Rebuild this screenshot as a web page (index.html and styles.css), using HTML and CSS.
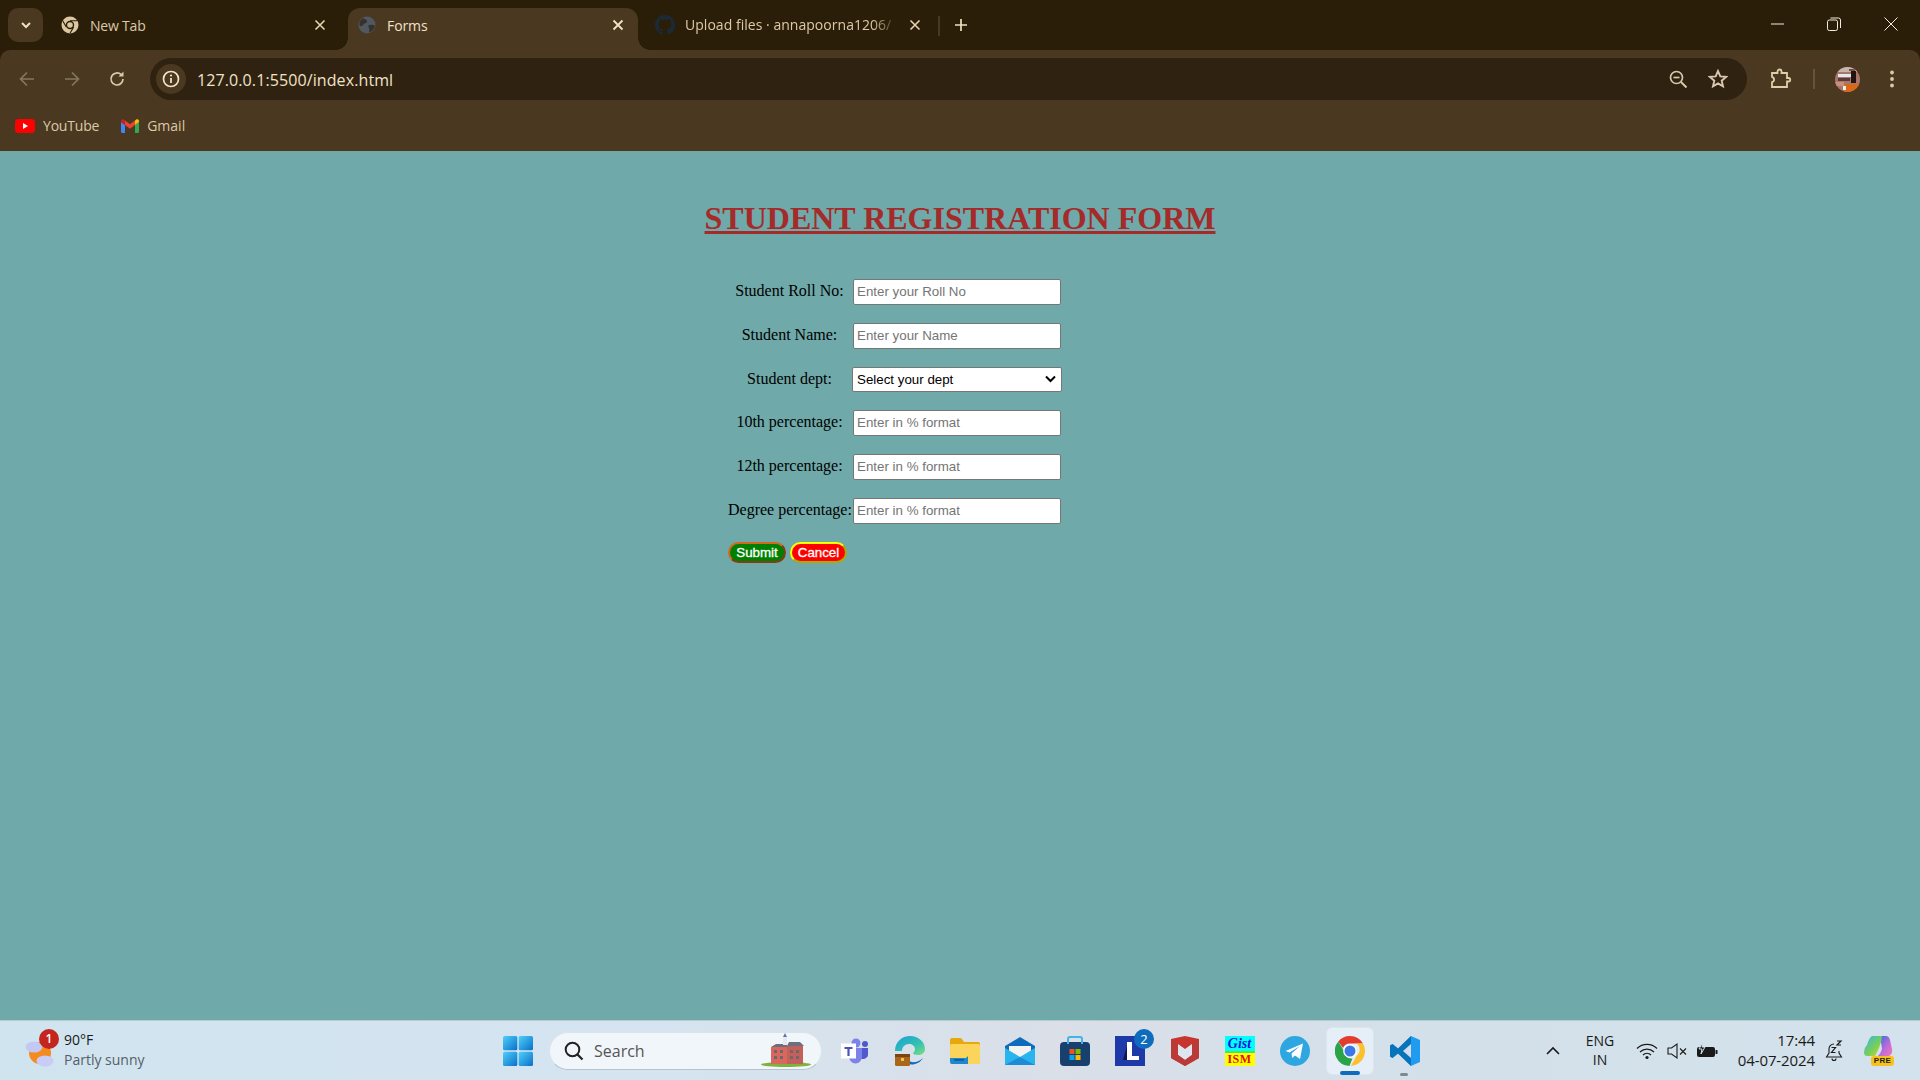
FILE: index.html
```html
<!DOCTYPE html>
<html lang="en">
<head>
<meta charset="utf-8">
<title>Forms</title>
<link rel="stylesheet" href="styles.css">
</head>
<body>
<div class="browser">
  <div class="tabstrip">
    <div class="tabsearch"><svg width="12" height="12" viewBox="0 0 12 12"><path d="M2 4l4 4 4-4" fill="none" stroke="#f0e0c0" stroke-width="2"/></svg></div>
    <div class="tab first">
      <svg class="fav" width="18" height="18" viewBox="0 0 18 18"><circle cx="9" cy="9" r="8.5" fill="#dcc7a3"/><circle cx="9" cy="9" r="4.2" fill="#2b1e09"/><circle cx="9" cy="9" r="2.8" fill="#dcc7a3"/><path d="M9 4.8h7.2M5.4 11.1L1.8 5M12.6 11.1L9 17.2" stroke="#2b1e09" stroke-width="1.1"/></svg>
      <span class="tabtitle">New Tab</span>
      <svg class="x" width="12" height="12" viewBox="0 0 12 12"><path d="M1.5 1.5l9 9M10.5 1.5l-9 9" stroke="#e6d3b0" stroke-width="1.6"/></svg>
    </div>
    <div class="tab active">
      <svg class="fav" width="18" height="18" viewBox="0 0 18 18"><circle cx="9" cy="9" r="8.5" fill="#515860"/><path d="M5 2.2c2 1 4 1.4 4 3.2S6.500 7 5.600 8.200 3.500 11 1.500 9.500C1 6 2.500 3.500 5 2.200zM11 9c2-.5 4.500-.5 6 .5-.4 3-2.500 5.800-5.500 7-1-1.500.5-3-.5-4.500-.6-1-1-2.500 0-3z" fill="#35322c"/></svg>
      <span class="tabtitle">Forms</span>
      <svg class="x" width="12" height="12" viewBox="0 0 12 12"><path d="M1.5 1.5l9 9M10.5 1.5l-9 9" stroke="#f3e3c5" stroke-width="1.8"/></svg>
    </div>
    <div class="tab third">
      <svg class="fav" width="20" height="20" viewBox="0 0 16 16"><path fill="#1c2a38" d="M8 0C3.580 0 0 3.580 0 8c0 3.540 2.290 6.530 5.470 7.590.4.070.55-.17.55-.38 0-.19-.01-.82-.01-1.490-2.010.37-2.530-.49-2.690-.94-.09-.23-.48-.94-.82-1.130-.28-.15-.68-.52-.01-.53.630-.01 1.080.58 1.230.82.720 1.210 1.870.87 2.330.66.070-.52.280-.87.510-1.070-1.780-.2-3.640-.89-3.640-3.950 0-.87.310-1.590.82-2.150-.08-.2-.36-1.020.08-2.120 0 0 .67-.21 2.200.82.640-.18 1.320-.27 2-.27s1.360.09 2 .27c1.530-1.040 2.200-.82 2.200-.82.440 1.100.16 1.920.08 2.120.51.560.82 1.270.82 2.150 0 3.070-1.870 3.750-3.650 3.950.290.250.540.730.540 1.480 0 1.070-.01 1.930-.01 2.200 0 .210.150.460.550.380A8.010 8.010 0 0016 8c0-4.420-3.580-8-8-8z"/></svg>
      <span class="tabtitle fade">Upload files · annapoorna1206/</span>
      <svg class="x" width="12" height="12" viewBox="0 0 12 12"><path d="M1.5 1.500l9 9M10.500 1.500l-9 9" stroke="#e6d3b0" stroke-width="1.600"/></svg>
    </div>
    <div class="tabsep"></div>
    <svg class="newtab" width="14" height="14" viewBox="0 0 14 14"><path d="M7 1v12M1 7h12" stroke="#f0e0c0" stroke-width="1.700"/></svg>
    <div class="winctl">
      <svg width="14" height="14" viewBox="0 0 14 14"><path d="M1 7h13" stroke="#f0ece4" stroke-width="1"/></svg>
      <svg width="14" height="14" viewBox="0 0 14 14"><rect x=".5" y="3" width="10" height="10.500" rx="1.800" fill="none" stroke="#f0ece4"/><path d="M3.500 1h8a2 2 0 012 2v8" fill="none" stroke="#f0ece4"/></svg>
      <svg width="14" height="14" viewBox="0 0 14 14"><path d="M.5.500l13 13M13.500.500l-13 13" stroke="#f0ece4" stroke-width="1"/></svg>
    </div>
  </div>
  <div class="toolbar">
    <div class="navbtns">
      <svg width="18" height="18" viewBox="0 0 18 18"><path d="M16 9H3M9 2.500L2.500 9 9 15.500" fill="none" stroke="#85775f" stroke-width="1.700"/></svg>
      <svg width="18" height="18" viewBox="0 0 18 18"><path d="M2 9h13M9 2.500L15.500 9 9 15.500" fill="none" stroke="#85775f" stroke-width="1.700"/></svg>
      <svg width="18" height="18" viewBox="0 0 18 18"><path d="M15 9a6 6 0 11-1.800-4.300" fill="none" stroke="#dcc9a8" stroke-width="1.700"/><path d="M15.500 1.500v5h-5z" fill="#dcc9a8"/></svg>
    </div>
    <div class="omnibox">
      <div class="chip"><svg width="18" height="18" viewBox="0 0 18 18"><circle cx="9" cy="9" r="7.500" fill="none" stroke="#f2e4c8" stroke-width="1.700"/><path d="M9 8v5" stroke="#f2e4c8" stroke-width="1.800"/><circle cx="9" cy="5.500" r="1.100" fill="#f2e4c8"/></svg></div>
      <span class="url">127.0.0.1:5500/index.html</span>
      <div class="omni-right">
        <svg width="20" height="20" viewBox="0 0 20 20"><circle cx="8.500" cy="8.500" r="6" fill="none" stroke="#d8c9ae" stroke-width="1.700"/><path d="M5.500 8.500h6" stroke="#d8c9ae" stroke-width="1.700"/><path d="M13 13l5.500 5.500" stroke="#d8c9ae" stroke-width="2"/></svg>
        <svg width="20" height="20" viewBox="0 0 20 20"><path d="M10 2l2.300 5.400 5.800.5-4.400 3.800 1.300 5.700-5-3-5 3 1.300-5.700L1.900 7.900l5.800-.5z" fill="none" stroke="#d8c9ae" stroke-width="1.900"/></svg>
      </div>
    </div>
    <div class="tool-right">
      <svg class="ext" width="22" height="22" viewBox="0 0 22 22"><path d="M2 5h5.500V3.500a2 2 0 014 0V5H17v5h1.500a1.500 1.500 0 010 3.500H17V19H2v-4.800a2.800 2.800 0 000-5.400z" fill="none" stroke="#e0cdaa" stroke-width="1.800"/></svg>
      <div class="toolsep"></div>
      <div class="avatar"><svg width="25" height="25" viewBox="0 0 25 25"><rect width="25" height="25" fill="#a8776a"/><rect y="0" width="25" height="5" fill="#c4b6ac"/><rect x="3" y="7" width="13" height="3" fill="#dfe9ef"/><rect x="3" y="11" width="12" height="3" fill="#5a3a34"/><rect x="16" y="4" width="5" height="12" fill="#231410"/><rect y="17" x="9" width="16" height="8" fill="#d9691a"/><rect x="0" y="15" width="9" height="4" fill="#c98f7e"/><rect x="8" y="19" width="3" height="4" fill="#eee"/><rect x="14" y="2" width="6" height="2" fill="#7c4a44"/></svg></div>
      <svg class="dots" width="6" height="18" viewBox="0 0 6 18"><circle cx="3" cy="2.500" r="1.900" fill="#dcc9a8"/><circle cx="3" cy="9" r="1.900" fill="#dcc9a8"/><circle cx="3" cy="15.500" r="1.900" fill="#dcc9a8"/></svg>
    </div>
  </div>
  <div class="bookmarks">
    <div class="bm yt">
      <svg width="20" height="14" viewBox="0 0 20 14"><rect width="20" height="14" rx="3.500" fill="#f00"/><path d="M8 4l5 3-5 3z" fill="#fff"/></svg>
      <span>YouTube</span>
    </div>
    <div class="bm gm">
      <svg width="18" height="14" viewBox="0 0 18 14"><path d="M0 3v9.500A1.500 1.500 0 001.500 14H4V6z" fill="#4285f4"/><path d="M14 6v8h2.500a1.500 1.500 0 001.500-1.500V3z" fill="#34a853"/><path d="M14 1.500V6l4-3V2c0-1.600-2-2.200-3-1.300z" fill="#fbbc04"/><path d="M4 6V1.500L9 5.300l5-3.800V6L9 9.700z" fill="#ea4335"/><path d="M0 2v1l4 3V1.500L3 .700C2-.200 0 .400 0 2z" fill="#c5221f"/></svg>
      <span>Gmail</span>
    </div>
  </div>
</div>

<main class="page">
  <h1 class="title">STUDENT REGISTRATION FORM</h1>
  <form class="regform">
    <label class="lbl">Student Roll No:</label>
    <input class="field" type="text" placeholder="Enter your Roll No">
    <label class="lbl">Student Name:</label>
    <input class="field" type="text" placeholder="Enter your Name">
    <label class="lbl">Student dept:</label>
    <div class="deptwrap">
      <select class="dept"><option>Select your dept</option></select>
      <svg class="deptarrow" width="11" height="8" viewBox="0 0 11 8"><path d="M1 1.500l4.500 4.500L10 1.500" fill="none" stroke="#000" stroke-width="2"/></svg>
    </div>
    <label class="lbl">10th percentage:</label>
    <input class="field" type="text" placeholder="Enter in % format">
    <label class="lbl">12th percentage:</label>
    <input class="field" type="text" placeholder="Enter in % format">
    <label class="lbl">Degree percentage:</label>
    <input class="field" type="text" placeholder="Enter in % format">
    <div class="actions">
      <button class="btn submit" type="button">Submit</button>
      <button class="btn cancel" type="button">Cancel</button>
    </div>
  </form>
</main>

<footer class="taskbar">
  <div class="weather">
    <div class="wicon">
      <svg width="30" height="34" viewBox="0 0 30 34"><circle cx="15" cy="19" r="11" fill="#f58a1f"/><ellipse cx="9" cy="13" rx="8.500" ry="5.500" fill="#c3c9f5"/><ellipse cx="20" cy="27" rx="8.500" ry="5.500" fill="#c9ccf7"/></svg>
      <span class="wbadge">1</span>
    </div>
    <div class="wtext"><span class="temp">90°F</span><span class="cond">Partly sunny</span></div>
  </div>
  <div class="tb-center">
    <div class="tbi start"><svg width="30" height="30" viewBox="0 0 30 30"><defs><linearGradient id="w" x1="0" y1="0" x2="1" y2="1"><stop offset="0" stop-color="#4fd0fb"/><stop offset="1" stop-color="#0a6fc8"/></linearGradient></defs><rect x="0" y="0" width="14.300" height="14.300" rx="1.500" fill="url(#w)"/><rect x="15.700" y="0" width="14.300" height="14.300" rx="1.500" fill="url(#w)"/><rect x="0" y="15.700" width="14.300" height="14.300" rx="1.500" fill="url(#w)"/><rect x="15.700" y="15.700" width="14.300" height="14.300" rx="1.500" fill="url(#w)"/></svg></div>
    <div class="search">
      <svg width="20" height="20" viewBox="0 0 20 20"><circle cx="8.500" cy="8.500" r="6.800" fill="none" stroke="#222" stroke-width="2"/><path d="M13.500 13.500l5 5" stroke="#222" stroke-width="2.200"/></svg>
      <span>Search</span>
      <svg class="church" width="50" height="36" viewBox="0 0 50 36"><ellipse cx="25" cy="31.500" rx="25" ry="2.500" fill="#7fb23c"/><rect x="10" y="14" width="30" height="17" fill="#d8685c"/><rect x="26" y="13" width="16" height="18" fill="#c4605a"/><path d="M10 14l5-3h10l2 3zM26 13l2-4h11l4 4z" fill="#6b6f80"/><rect x="22" y="4" width="4" height="8" fill="#e8e8ee"/><path d="M24 0l2 4h-4z" fill="#5a78b0"/><g fill="#6f6470"><rect x="13" y="17" width="3" height="3"/><rect x="19" y="17" width="3" height="3"/><rect x="29" y="17" width="3" height="3"/><rect x="35" y="17" width="3" height="3"/><rect x="13" y="23" width="3" height="3"/><rect x="19" y="23" width="3" height="3"/><rect x="29" y="23" width="3" height="3"/><rect x="35" y="23" width="3" height="3"/></g></svg>
    </div>
    <div class="tbi"><svg width="28" height="26" viewBox="0 0 28 26"><circle cx="15" cy="5" r="4.500" fill="#7b83eb"/><circle cx="24" cy="6" r="3" fill="#5059c9"/><path d="M19 10h8v7a5 5 0 01-8 3z" fill="#5059c9"/><path d="M8 10h13v9a6.500 6.500 0 01-13 0z" fill="#7b83eb"/><rect x="0" y="5.500" width="15" height="15" fill="#fff"/><path d="M3.500 9h8v2H8.600v7H6.400v-7H3.500z" fill="#4b53bc"/></svg></div>
    <div class="tbi"><svg width="30" height="30" viewBox="0 0 30 30"><defs><linearGradient id="e" x1="0" y1="0" x2="1" y2="1"><stop offset="0" stop-color="#18a0d8"/><stop offset=".6" stop-color="#35c1b0"/><stop offset="1" stop-color="#7ee07a"/></linearGradient></defs><path d="M0 15C0 6 7 0 15 0c8.500 0 15 6 15 13 0 4-3.500 6-7 6-3 0-5-1-5-2 1-1 2-2 2-4 0-3-3-5-6-5-4 0-7 3-7 7H0z" fill="url(#e)"/><path d="M9 19c2 6 10 11 19 3-4 7-14 9-19 3z" fill="#0f6cbd"/><rect x="0" y="18" width="15" height="12" rx="1.500" fill="#a8661a"/><rect x="0" y="18" width="15" height="3" fill="#7a4510"/><rect x="6" y="22" width="3" height="3" fill="#f2c14e"/></svg></div>
    <div class="tbi"><svg width="30" height="26" viewBox="0 0 30 26"><path d="M0 2a2 2 0 012-2h9l3 4h14a2 2 0 012 2v18a2 2 0 01-2 2H2a2 2 0 01-2-2z" fill="#e8a80c"/><rect y="6" width="30" height="20" rx="1.500" fill="#fbd45b"/><path d="M0 20h16l2-2h0v8H2a2 2 0 01-2-2z" fill="#1f86d0"/><rect x="4" y="21" width="10" height="1.800" fill="#0d5fa0"/></svg></div>
    <div class="tbi"><svg width="30" height="28" viewBox="0 0 30 28"><path d="M0 9L15 0l15 9v19H0z" fill="#0f6cbd"/><path d="M4 9h22v7l-11 6-11-6z" fill="#f3f3f3"/><path d="M0 11l15 9 15-9v17H0z" fill="#29b4ee"/><path d="M0 28l15-8 15 8z" fill="#1d8cd8"/></svg></div>
    <div class="tbi"><svg width="30" height="30" viewBox="0 0 30 30"><rect x="0" y="6" width="30" height="24" rx="4" fill="#17406f"/><path d="M8 8V3a2 2 0 012-2h10a2 2 0 012 2v5" fill="none" stroke="#41b4e8" stroke-width="2"/><rect x="9.500" y="13" width="5" height="5" fill="#f25022"/><rect x="15.500" y="13" width="5" height="5" fill="#7fba00"/><rect x="9.500" y="19" width="5" height="5" fill="#00a4ef"/><rect x="15.500" y="19" width="5" height="5" fill="#ffb900"/></svg></div>
    <div class="tbi lbox">
      <svg width="30" height="30" viewBox="0 0 30 30"><rect width="30" height="30" fill="#1e3aa8"/><path d="M8 24l5-18h4l-1 18z" fill="#0b1a50"/><path d="M12 6h5v14h7v4H12z" fill="#fff"/></svg>
      <span class="cbadge">2</span>
    </div>
    <div class="tbi"><svg width="28" height="30" viewBox="0 0 28 30"><path d="M0 3l14-3 14 3v19l-14 8-14-8z" fill="#c8342e"/><path d="M7 8l7 5 7-5v11l-7 5-7-5z" fill="#dde5ee"/><path d="M0 3l7 5v11l7 5 7-5V8l7-5v19l-14 8-14-8z" fill="#b93a36"/></svg></div>
    <div class="tbi"><div class="gist"><span class="gist-top">Gist</span><span class="gist-mid"></span><span class="gist-bot">ISM</span></div></div>
    <div class="tbi"><svg width="30" height="30" viewBox="0 0 30 30"><circle cx="15" cy="15" r="15" fill="#2ea6e0"/><path d="M5.500 15L23 7.500 20 23l-5-3.500-2.800 2.600-.7-4.600L20 10l-10.500 6.500z" fill="#fff"/></svg></div>
    <div class="tbi current">
      <svg width="30" height="30" viewBox="0 0 30 30"><path d="M15 0a15 15 0 0113 7.500H15a7.500 7.500 0 00-7 4.500L3.300 5.500A15 15 0 0115 0z" fill="#e33b2e"/><path d="M28 7.500A15 15 0 0115.800 30l6-10.500a7.500 7.500 0 00-.3-12z" fill="#fbc02d"/><path d="M3.300 5.500L9 15a7 7 0 008.500 7.200L14.500 30A15 15 0 013.300 5.500z" fill="#2aa34a"/><circle cx="15" cy="15" r="6.800" fill="#fff"/><circle cx="15" cy="15" r="5.500" fill="#3b78e7"/></svg>
      <span class="ind active-ind"></span>
    </div>
    <div class="tbi">
      <svg width="30" height="30" viewBox="0 0 30 30"><path d="M21 0l9 4v22l-9 4L8 17.500 2.500 22 0 20.500v-11L2.500 8 8 12.500z" fill="#1f9cf0"/><path d="M21 0L8 12.500 2.500 8 0 9.500v11L2.500 22 8 17.500 21 30z" fill="#0065a9" opacity=".75"/><path d="M21 8l-8 7 8 7z" fill="#d0dfeb"/></svg>
      <span class="ind run-ind"></span>
    </div>
  </div>
  <div class="tray">
    <svg class="chev" width="16" height="10" viewBox="0 0 16 10"><path d="M2 8l6-6 6 6" fill="none" stroke="#1a1a1a" stroke-width="1.600"/></svg>
    <div class="lang"><span>ENG</span><span>IN</span></div>
    <div class="sysicons">
      <svg width="22" height="18" viewBox="0 0 22 18"><path d="M1 6.500a14 14 0 0120 0M4 10a10 10 0 0114 0M7 13a5.500 5.500 0 018 0" fill="none" stroke="#1a1a1a" stroke-width="1.200"/><circle cx="11" cy="15.500" r="1.600" fill="#1a1a1a"/></svg>
      <svg width="20" height="18" viewBox="0 0 20 18"><path d="M1 6h3.500L10 2v14l-5.500-4H1z" fill="none" stroke="#1a1a1a" stroke-width="1.100"/><path d="M13 6.500l6 6M19 6.500l-6 6" stroke="#1a1a1a" stroke-width="1.100"/></svg>
      <svg width="22" height="18" viewBox="0 0 22 18"><rect x="1" y="5" width="18" height="10" rx="2" fill="#1a1a1a"/><rect x="19.500" y="8" width="2" height="4" fill="#1a1a1a"/><path d="M7 0L3 7h3l-1 5 4-7H6z" fill="#1a1a1a" stroke="#d3e0eb"/></svg>
    </div>
    <div class="clock"><span>17:44</span><span>04-07-2024</span></div>
    <svg class="bell" width="18" height="22" viewBox="0 0 18 22"><path d="M9 4a5 5 0 00-5 5v4l-2.500 4h15L14 13v-2" fill="none" stroke="#1a1a1a" stroke-width="1.100"/><path d="M7 18.500a2 2 0 004 0" fill="none" stroke="#1a1a1a" stroke-width="1.100"/><path d="M6.500 7.500h4l-4 5h4M12 1h4l-4 4h4" fill="none" stroke="#1a1a1a" stroke-width="1.200"/></svg>
    <div class="copilot">
      <svg width="29" height="24" viewBox="0 0 29 24"><defs><linearGradient id="c1" x1="0" y1="0" x2="1" y2="1"><stop offset="0" stop-color="#2fb8e6"/><stop offset=".6" stop-color="#7fd04f"/><stop offset="1" stop-color="#f2d34a"/></linearGradient><linearGradient id="c2" x1="0" y1="0" x2="1" y2="1"><stop offset="0" stop-color="#2a6fe0"/><stop offset=".6" stop-color="#c46bd8"/><stop offset="1" stop-color="#f07ab0"/></linearGradient></defs><path d="M8 0h11l-4 12q-1 3-4 8H3Q0 20 0 16 0 12 3 9 5 2 8 0z" fill="url(#c1)"/><path d="M18 0h4q3 0 4 4l2 9q1 5-3 7H14q3-3 4-7l-1-7z" fill="url(#c2)"/></svg>
      <span class="pre">PRE</span>
    </div>
  </div>
</footer>
</body>
</html>
```
FILE: styles.css
```css
* { box-sizing: border-box; }
html, body { margin: 0; padding: 0; height: 100%; }
body {
  display: flex;
  flex-direction: column;
  height: 1080px;
  overflow: hidden;
  font-family: "Open Sans", "Noto Sans", sans-serif;
  background: #6fa9a9;
}
.browser { flex: none; background: #2b1e09; }

/* tab strip */
.tabstrip { height: 50px; display: flex; align-items: flex-start; padding-left: 8px; position: relative; }
.tabsearch {
  width: 35px; height: 34px; margin-top: 8px; border-radius: 10px; background: #4a3820;
  display: flex; align-items: center; justify-content: center;
}
.tab { height: 42px; margin-top: 8px; display: flex; align-items: center; position: relative; color: #dcc9a8; font-size: 14px; letter-spacing: -.2px; }
.tab .fav { flex: none; }
.tab .x { flex: none; margin-left: auto; }
.tab.first { width: 305px; padding: 0 0 0 18px; margin-bottom: 0; }
.tab.first .x { margin-right: 22px; margin-top: -8px; }
.tab.first .fav { margin-top: -8px; }
.tab.first .tabtitle { margin-left: 11px; margin-top: -8px; }
.tab.active { width: 290px; background: #4a3820; border-radius: 12px 12px 0 0; padding: 0 0 0 10px; color: #f0e2c8; letter-spacing: -.1px; }
.tab.active .fav { margin-top: -8px; }
.tab.active .tabtitle { margin-left: 11px; margin-top: -8px; }
.tab.active .x { margin-right: 14px; margin-top: -8px; }
.tab.active::before, .tab.active::after {
  content: ""; position: absolute; bottom: 0; width: 12px; height: 12px;
}
.tab.active::before { left: -12px; background: radial-gradient(circle at 0 0, #2b1e09 11.500px, #4a3820 12px); }
.tab.active::after { right: -12px; background: radial-gradient(circle at 100% 0, #2b1e09 11.500px, #4a3820 12px); }
.tab.third { width: 300px; padding-left: 17px; letter-spacing: .03px; }
.tab.third .fav { margin-top: -8px; }
.tab.third .tabtitle { margin-left: 10px; margin-top: -9px; width: 207px; white-space: nowrap; overflow: hidden; }
.tab.third .x { margin-right: 17px; margin-top: -8px; }
.fade { -webkit-mask-image: linear-gradient(to right, #000 90%, rgba(0,0,0,.25)); mask-image: linear-gradient(to right, #000 90%, rgba(0,0,0,.25)); }
.tabsep { width: 2px; height: 20px; margin: 16px 0 0 0; background: #4a3820; }
.newtab { margin: 18px 0 0 14px; }
.winctl { margin-left: auto; display: flex; gap: 43px; padding: 17px 22px 0 0; }
.winctl svg { flex: none; }

/* toolbar */
.toolbar { height: 50px; background: #4a3820; border-radius: 10px 10px 0 0; display: flex; align-items: center; padding: 8px 0 0 18px; position: relative; }
.navbtns { display: flex; gap: 27px; width: 132px; padding-top: 0; }
.omnibox { width: 1597px; height: 42px; background: #302210; border-radius: 21px; display: flex; align-items: center; padding: 0 19px 0 6px; }
.chip { width: 30px; height: 30px; border-radius: 50%; background: #4a3820; display: flex; align-items: center; justify-content: center; flex: none; }
.url { margin-left: 11px; margin-top: 1px; font-size: 16px; color: #f0e2c8; letter-spacing: .1px; }
.omni-right { margin-left: auto; display: flex; gap: 20px; }
.tool-right { flex: 1; display: flex; align-items: center; padding-left: 23px; }
.toolsep { width: 2px; height: 20px; background: #67553a; margin-left: 21px; }
.avatar { width: 25px; height: 25px; border-radius: 50%; overflow: hidden; margin-left: 20px; flex: none; }
.avatar svg { display: block; }
.dots { margin-left: 29px; }

/* bookmarks */
.bookmarks { height: 51px; background: #4a3820; display: flex; align-items: center; padding: 0 0 0 15px; font-size: 14px; color: #dcc9a8; }
.yt { letter-spacing: -.2px; }
.bm { display: flex; align-items: center; gap: 8px; }
.gm { margin-left: 22px; }

/* page */
.page { flex: 1; padding-top: 49px; min-height: 0; }
.title {
  margin: 0 0 42px; text-align: center; font-family: "Liberation Serif", serif;
  font-size: 32px; font-weight: bold; color: #a52a2a; text-decoration: underline;
}
.regform {
  display: grid; grid-template-columns: 123px 208px; column-gap: 2px; row-gap: 18px;
  margin-left: 728px; width: 333px; align-items: start;
}
.lbl { font-family: "Liberation Serif", serif; font-size: 16px; color: #000; text-align: center; padding-top: 3px; white-space: nowrap; }
.field {
  width: 208px; height: 26px; padding: 0 3px 2px; margin: 0;
  border: 1px solid #767676; border-radius: 2px; background: #fff;
  font-family: "Liberation Sans", sans-serif; font-size: 13.333px;
}
.field::placeholder { color: #757575; }
.deptwrap { position: relative; width: 210px; height: 25px; margin-left: -1px; }
.dept {
  display: block; width: 210px; height: 25px; margin: 0; padding: 0 0 0 4px;
  -webkit-appearance: none; appearance: none;
  font-family: "Liberation Sans", sans-serif; font-size: 13.333px; background: #fff; color: #000;
  border: 1px solid #767676; border-radius: 2px;
}
.deptarrow { position: absolute; right: 6px; top: 8px; pointer-events: none; }
.actions { grid-column: 1 / -1; display: flex; gap: 4px; }
.btn {
  height: 21px; padding: 0; border-radius: 11px; color: #fff; border-width: 2px; border-style: outset;
  font-family: "Liberation Sans", sans-serif; font-size: 13.333px; font-weight: normal;
  -webkit-text-stroke: .3px #fff;
}
.submit { width: 58px; background: #008000; border-color: #d2691e; }
.cancel { width: 57px; background: #f00; border-color: #ff0; }

/* taskbar */
.taskbar {
  flex: none; height: 60px; border-top: 1px solid #b9c9d0;
  background: linear-gradient(90deg, #d0e4ef 0%, #d5e4f0 35%, #dadfe8 55%, #d3e0ea 75%, #d3e2ec 100%);
  display: flex; align-items: center; position: relative; color: #1a1a1a;
}
.weather { width: 495px; display: flex; align-items: center; padding-left: 25px; flex: none; }
.wicon { position: relative; width: 30px; height: 34px; margin-right: 9px; margin-top: 0; }
.wicon svg { display: block; }
.wbadge {
  position: absolute; top: -5px; left: 14px; width: 20px; height: 20px; border-radius: 50%;
  background: #c4261d; color: #fff; font-size: 12px; font-weight: 600; line-height: 20px; text-align: center;
}
.wtext { display: flex; flex-direction: column; font-size: 14px; line-height: 20px; margin-top: -2px; }
.cond { color: #555f68; }
.tb-center { display: flex; align-items: center; flex: none; }
.tbi { width: 55px; height: 48px; display: flex; align-items: center; justify-content: center; position: relative; flex: none; }
.start { width: 45px; }
.search {
  width: 273px; height: 38px; margin: 0 5px 0 9px; background: #f1f6fb; border-radius: 19px;
  border: 1px solid #dbe3ea; border-bottom-color: #b6c2cc;
  display: flex; align-items: center; padding-left: 14px; font-size: 16px; color: #555; position: relative;
}
.search span { margin-left: 10px; }
.church { position: absolute; right: 10px; bottom: 0; }
.lbox .cbadge {
  position: absolute; top: 2px; right: 3px; width: 20px; height: 20px; border-radius: 50%;
  background: #0f6cbd; color: #fff; font-size: 13px; line-height: 20px; text-align: center;
}
.gist { width: 30px; height: 30px; display: flex; flex-direction: column; background: #ff0; overflow: hidden; }
.gist-top { height: 15px; background: #0ff; color: #1414d8; font: italic bold 14px/15px "Liberation Serif", serif; text-align: center; }
.gist-mid { height: 2px; background: #4be84b; }
.gist-bot { height: 13px; color: #e01010; font: bold 12px/13px "Liberation Serif", serif; text-align: center; letter-spacing: .5px; }
.tbi.current { width: 48px; margin: 0 3.500px; background: #e6eff7; border-radius: 6px; border: 1px solid #dce6ee; }
.ind { position: absolute; bottom: 0; border-radius: 2px; }
.active-ind { width: 20px; height: 4px; background: #0f6cbd; left: 13px; bottom: -1px; }
.run-ind { width: 8px; height: 3px; background: #7e8890; left: 23px; bottom: -1px; }
.tray { flex: 1; display: flex; align-items: center; padding-left: 113px; }
.chev { flex: none; }
.lang { display: flex; flex-direction: column; align-items: center; font-size: 14px; line-height: 19px; width: 40px; margin-left: 19px; margin-top: -2px; }
.sysicons { display: flex; gap: 9px; align-items: center; margin-left: 16px; }
.clock { display: flex; flex-direction: column; align-items: flex-end; font-size: 15px; line-height: 20px; width: 90px; margin-left: 7px; margin-top: -1px; letter-spacing: -.1px; }
.bell { margin-left: 10px; }
.copilot { position: relative; width: 29px; height: 30px; margin-left: 21px; }
.copilot svg { display: block; }
.pre {
  position: absolute; right: -1px; bottom: 0; width: 23px; height: 10px; border-radius: 3px; background: #f7c21a;
  font: bold 8px/10px "Liberation Sans", sans-serif; text-align: center; color: #222; letter-spacing: .4px;
}
```
